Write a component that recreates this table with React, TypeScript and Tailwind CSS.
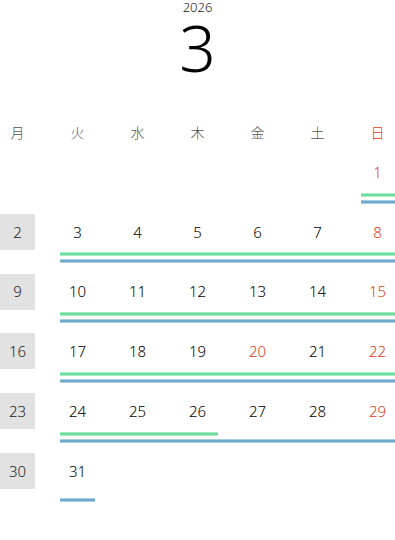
import React from "react";

type Day = { d: number; red?: boolean } | null;
type Week = {
  label: string | null;
  days: Day[];
  green?: string;
  blue?: string;
};

const weeks: Week[] = [
  {
    label: null,
    days: [null, null, null, null, null, { d: 1, red: true }],
    green: "col-start-7 col-end-8 ml-[1px]",
    blue: "col-start-7 col-end-8 ml-[1px]",
  },
  {
    label: "2",
    days: [{ d: 3 }, { d: 4 }, { d: 5 }, { d: 6 }, { d: 7 }, { d: 8, red: true }],
    green: "col-start-2 col-end-8",
    blue: "col-start-2 col-end-8",
  },
  {
    label: "9",
    days: [{ d: 10 }, { d: 11 }, { d: 12 }, { d: 13 }, { d: 14 }, { d: 15, red: true }],
    green: "col-start-2 col-end-8",
    blue: "col-start-2 col-end-8",
  },
  {
    label: "16",
    days: [{ d: 17 }, { d: 18 }, { d: 19 }, { d: 20, red: true }, { d: 21 }, { d: 22, red: true }],
    green: "col-start-2 col-end-8",
    blue: "col-start-2 col-end-8",
  },
  {
    label: "23",
    days: [{ d: 24 }, { d: 25 }, { d: 26 }, { d: 27 }, { d: 28 }, { d: 29, red: true }],
    green: "col-start-2 col-end-5 mr-[-3px]",
    blue: "col-start-2 col-end-8",
  },
  {
    label: "30",
    days: [{ d: 31 }, null, null, null, null, null],
    blue: "col-start-2 col-end-3",
  },
];

const heads = ["月", "火", "水", "木", "金", "土", "日"];

export default function App() {
  return (
    <div
      className="w-[395px] h-[540px] bg-white overflow-hidden"
      style={{ fontFamily: '"Noto Sans", "Noto Sans CJK JP", sans-serif' }}
    >
      <div className="flex flex-col items-center">
        <div className="h-[14px] text-[13px] leading-[14px] font-light text-[#222]">2026</div>
        <div className="mt-[2px] h-[64px] text-[64px] leading-[64px] font-light text-black">3</div>
      </div>

      <div className="mt-[37px] grid grid-cols-[repeat(7,35px)] justify-between h-[30px] items-center">
        {heads.map((h, i) => (
          <div
            key={h}
            className={`text-center text-[14px] leading-[30px] ${i === 6 ? "text-[#e03c1c]" : "text-[#555]"}`}
            style={{ fontFamily: '"Noto Sans CJK JP", sans-serif', fontWeight: 300 }}
          >
            {h}
          </div>
        ))}
      </div>

      <div className="mt-[7px] flex flex-col">
        {weeks.map((w, wi) => (
          <div key={wi} className="h-[59.75px] grid grid-cols-[repeat(7,35px)] justify-between content-start">
            <div className="h-[36px] flex items-center justify-center">
              {w.label && (
                <div className="w-[35px] h-[36px] bg-[#e2e2e2] flex items-center justify-center text-[15px] font-light text-[#222]">
                  {w.label}
                </div>
              )}
            </div>
            {w.days.map((d, di) => (
              <div
                key={di}
                className={`h-[36px] flex items-center justify-center text-[15px] font-light ${d && d.red ? "text-[#dc3a1a]" : "text-black"}`}
              >
                {d ? d.d : ""}
              </div>
            ))}
            <div className={`row-start-2 mt-[2.5px] h-[4px] ${w.green ? "" : "invisible"} ${w.green ?? "col-start-2 col-end-3"}`}>
              <div className="h-full bg-[#6fdc9f] border-y border-[#a6ecc4]" />
            </div>
            <div className={`row-start-3 mt-[3px] h-[4px] ${w.blue ?? "col-start-2 col-end-3 invisible"}`}>
              <div className="h-full bg-[#6faacd] border-y border-[#a9cde2]" />
            </div>
          </div>
        ))}
      </div>
    </div>
  );
}
